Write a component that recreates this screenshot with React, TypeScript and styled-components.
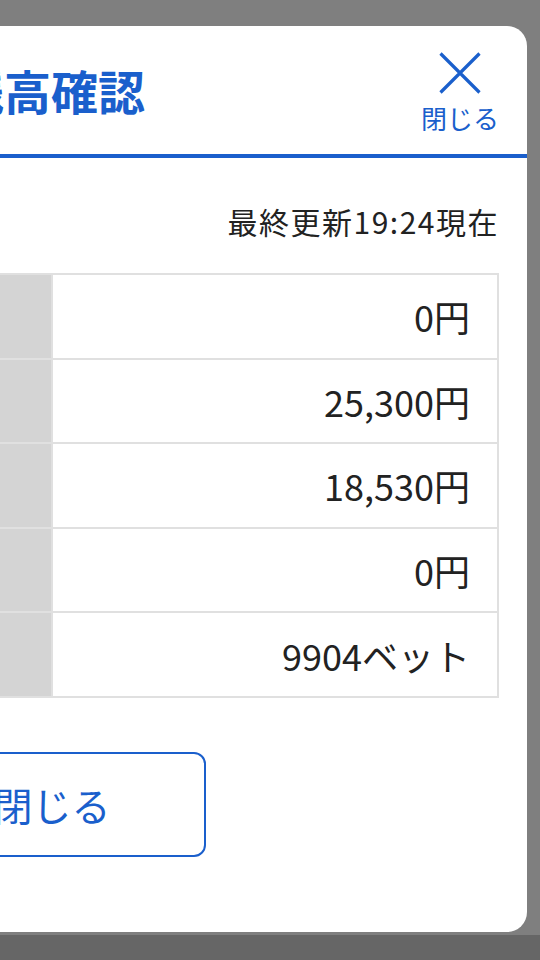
import React from 'react';
import styled, { createGlobalStyle } from 'styled-components';

const Global = createGlobalStyle`
  html, body { margin: 0; padding: 0; }
  body {
    width: 540px;
    height: 960px;
    overflow: hidden;
    background: linear-gradient(#7f7f7f 0, #7f7f7f 935px, #666666 935px);
    font-family: "Noto Sans CJK JP", "Noto Sans", sans-serif;
  }
`;

const BLUE = '#1a5fcc';

const Overlay = styled.div`
  width: 540px;
  height: 960px;
  overflow: hidden;
  padding-top: 26px;
  box-sizing: border-box;
`;

const Modal = styled.section`
  margin-left: -130px;
  width: 657px;
  box-sizing: border-box;
  background: #ffffff;
  border-radius: 20px;
  padding: 0 28px 75px;
`;

const Header = styled.header`
  display: flex;
  justify-content: space-between;
  align-items: flex-start;
  height: 132px;
  box-sizing: border-box;
  margin: 0 -28px;
  padding: 0 28px;
  border-bottom: 4px solid ${BLUE};
`;

const Title = styled.h2`
  margin: 0;
  align-self: center;
  padding-left: 59px;
  font-size: 47px;
  font-weight: 700;
  line-height: 1.2;
  color: ${BLUE};
`;

const CloseIcon = styled.button`
  display: flex;
  flex-direction: column;
  align-items: center;
  border: none;
  background: none;
  padding: 25px 0 0;
  margin: 0;
  color: ${BLUE};
  font-family: inherit;
  cursor: pointer;
`;

const CloseLabel = styled.span`
  margin-top: 8px;
  font-size: 26px;
  line-height: 30px;
`;

const Updated = styled.p`
  margin: 0 0 29px;
  padding-top: 41px;
  text-align: right;
  font-size: 30px;
  letter-spacing: 1.5px;
  line-height: 45px;
  color: #222222;
`;

const Table = styled.div`
  display: grid;
  grid-template-columns: 151px 1fr;
  gap: 2px;
  padding: 2px;
  background: #e0e0e0;
`;

const LabelCell = styled.div`
  height: 82.6px;
  background: #d4d4d4;
`;

const ValueCell = styled.div`
  height: 82.6px;
  background: #ffffff;
  display: flex;
  align-items: center;
  justify-content: flex-end;
  padding-right: 27px;
  font-size: 36px;
  color: #222222;
`;

const Footer = styled.div`
  display: flex;
  margin-top: 54px;
`;

const CloseButton = styled.button`
  width: 308px;
  height: 105px;
  box-sizing: border-box;
  border: 2px solid ${BLUE};
  border-radius: 12px;
  background: #ffffff;
  color: ${BLUE};
  font-family: inherit;
  font-size: 39px;
  cursor: pointer;
`;

const rows = ['0円', '25,300円', '18,530円', '0円', '9904ベット'];

export default function App() {
  return (
    <>
      <Global />
      <Overlay>
        <Modal>
          <Header>
            <Title>残高確認</Title>
            <CloseIcon aria-label="閉じる">
              <svg width="44" height="44" viewBox="0 0 44 44" fill="none">
                <path d="M2.5 2.5 L41.5 41.5 M41.5 2.5 L2.5 41.5" stroke="currentColor" strokeWidth="3.2" />
              </svg>
              <CloseLabel>閉じる</CloseLabel>
            </CloseIcon>
          </Header>
          <Updated>最終更新19:24現在</Updated>
          <Table>
            {rows.map((v, i) => (
              <React.Fragment key={i}>
                <LabelCell />
                <ValueCell>{v}</ValueCell>
              </React.Fragment>
            ))}
          </Table>
          <Footer>
            <CloseButton>閉じる</CloseButton>
          </Footer>
        </Modal>
      </Overlay>
    </>
  );
}
